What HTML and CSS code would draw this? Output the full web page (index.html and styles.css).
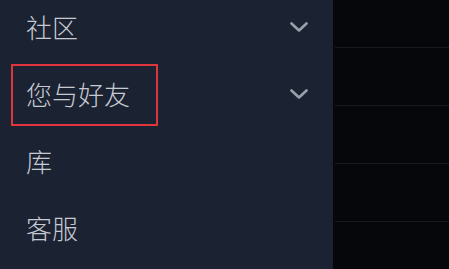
FILE: index.html
```html
<!DOCTYPE html>
<html lang="zh-CN">
<head>
<meta charset="UTF-8">
<meta name="viewport" content="width=device-width, initial-scale=1.0">
<title>菜单</title>
<link rel="stylesheet" href="styles.css">
</head>
<body>

<!-- SIDE MENU -->
<nav class="menu">
    <div class="menu-item">
        <span>社区</span>
        <svg class="chev" viewBox="0 0 18 10"><path d="M1.5 1.5 L9 8.5 L16.5 1.5"/></svg>
    </div>
    <div class="menu-item marked">
        <span>您与好友</span>
        <svg class="chev" viewBox="0 0 18 10"><path d="M1.5 1.5 L9 8.5 L16.5 1.5"/></svg>
        <div class="mark"></div>
    </div>
    <div class="menu-item">
        <span>库</span>
    </div>
    <div class="menu-item">
        <span>客服</span>
    </div>
</nav>

<!-- PAGE BEHIND -->
<main class="page">
    <div class="row"></div>
    <div class="row"></div>
    <div class="row"></div>
    <div class="row"></div>
    <div class="row"></div>
</main>

</body>
</html>
```

FILE: styles.css
```css
* {
    margin: 0;
    padding: 0;
    box-sizing: border-box;
}

html, body {
    width: 100%;
    height: 100%;
    overflow: hidden;
    background: #05070b;
    font-family: "Noto Sans CJK SC", "Noto Sans", sans-serif;
}

body {
    display: flex;
}

/* =======================
     SIDE MENU
======================== */
.menu {
    width: 333px;
    flex-shrink: 0;
    height: 100%;
    background: #1b2232;
}

.menu-item {
    position: relative;
    height: 67px;
    display: flex;
    align-items: center;
    justify-content: space-between;
    padding: 0 25px 0 26px;
    color: #c6cad2;
    font-size: 26px;
    font-weight: 300;
    line-height: 1;
}

.menu-item:first-child {
    margin-top: -7px;
}

.chev {
    width: 18px;
    height: 10px;
    fill: none;
    stroke: #9aa0ab;
    stroke-width: 2.6;
    stroke-linecap: round;
    stroke-linejoin: round;
}

/* annotation box */
.mark {
    position: absolute;
    left: 11px;
    top: 4px;
    width: 147px;
    height: 62px;
    border: 2px solid #e0353c;
    pointer-events: none;
}

/* =======================
     PAGE BEHIND
======================== */
.page {
    flex: 1;
    height: 100%;
    padding-left: 2px;
}

.row {
    height: 58px;
    border-bottom: 1px solid #161a22;
}

.row:first-child {
    margin-top: -10px;
}
```
